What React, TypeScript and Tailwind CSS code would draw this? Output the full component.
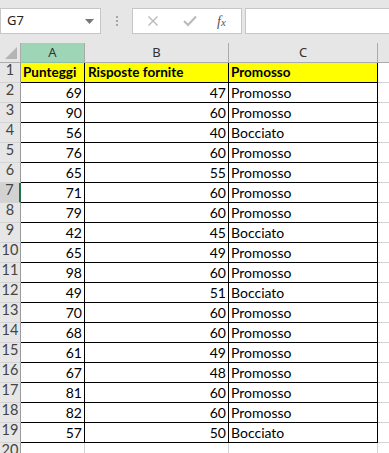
import React from "react";

type Row = [number, number, string];

const rows: Row[] = [
  [69, 47, "Promosso"],
  [90, 60, "Promosso"],
  [56, 40, "Bocciato"],
  [76, 60, "Promosso"],
  [65, 55, "Promosso"],
  [71, 60, "Promosso"],
  [79, 60, "Promosso"],
  [42, 45, "Bocciato"],
  [65, 49, "Promosso"],
  [98, 60, "Promosso"],
  [49, 51, "Bocciato"],
  [70, 60, "Promosso"],
  [68, 60, "Promosso"],
  [61, 49, "Promosso"],
  [67, 48, "Promosso"],
  [81, 60, "Promosso"],
  [82, 60, "Promosso"],
  [57, 50, "Bocciato"],
];

const cellFont = { fontFamily: "Lato, 'Liberation Sans', sans-serif" };

const RowHeader: React.FC<{ n: number; active?: boolean }> = ({ n, active }) => (
  <div
    className={`w-[21px] h-[20px] shrink-0 flex items-end justify-center pb-[1px] text-[14.5px] font-normal text-[#444] border-b border-[#d4d4d4] ${
      active ? "bg-[#d2d2d2] border-r-2 border-r-[#217346]" : "bg-[#e6e6e6] border-r border-r-[#9b9b9b]"
    }`}
  >
    {n}
  </div>
);

export default function App() {
  return (
    <div className="w-[389px] h-[453px] overflow-hidden bg-white text-black" style={cellFont}>
      {/* toolbar */}
      <div className="h-[43px] bg-[#e6e6e6] flex items-start pt-[8px]" style={{ fontFamily: "'Noto Sans', 'Liberation Sans', sans-serif" }}>
        <div className="w-[101px] h-[26px] bg-white border border-[#c6c6c6] flex items-center justify-between pl-[6px] pr-[6px] text-[13px] text-[#222]">
          <span>G7</span>
          <svg width="9" height="5" viewBox="0 0 9 5">
            <path d="M0 0 L9 0 L4.5 5 Z" fill="#777" />
          </svg>
        </div>
        <div className="w-[31px] h-[26px] flex flex-col items-center justify-center gap-[2px]">
          <div className="w-[2px] h-[2px] bg-[#a6a6a6]" />
          <div className="w-[2px] h-[2px] bg-[#a6a6a6]" />
          <div className="w-[2px] h-[2px] bg-[#a6a6a6]" />
        </div>
        <div className="w-[110px] h-[26px] bg-white border border-[#c6c6c6] flex items-center">
          <svg className="ml-[14px]" width="12" height="12" viewBox="0 0 12 12">
            <path d="M1.5 1.5 L10.5 10.5 M10.5 1.5 L1.5 10.5" stroke="#b9b9b9" strokeWidth="1.4" />
          </svg>
          <svg className="ml-[24px]" width="14" height="12" viewBox="0 0 14 12">
            <path d="M1 6 L5 10 L13 1.5" stroke="#b9b9b9" strokeWidth="2" fill="none" />
          </svg>
          <span
            className="ml-[20px] text-[14px] italic text-[#555]"
            style={{ fontFamily: "'Liberation Serif', serif" }}
          >
            f<span className="text-[11px]">x</span>
          </span>
        </div>
        <div className="ml-[3px] flex-1 h-[26px] bg-white border border-[#c6c6c6] border-r-0" />
      </div>

      {/* column headers */}
      <div className="flex h-[20px] bg-[#e6e6e6] text-[13px] text-[#333]" style={{ fontFamily: "'Noto Sans', 'Liberation Sans', sans-serif" }}>
        <div className="w-[21px] shrink-0 border-r border-b border-[#ababab] relative">
          <svg className="absolute right-[3px] bottom-[3px]" width="12" height="12" viewBox="0 0 12 12">
            <path d="M12 0 L12 12 L0 12 Z" fill="#b4b4b4" />
          </svg>
        </div>
        <div className="w-[64px] shrink-0 bg-[#9fd5b7] border-r border-[#ababab] border-b border-b-[#8fbfa3] flex items-center justify-center">A</div>
        <div className="w-[144px] shrink-0 border-r border-b border-[#ababab] flex items-center justify-center">B</div>
        <div className="w-[149px] shrink-0 border-r border-b border-[#ababab] flex items-center justify-center">C</div>
        <div className="flex-1 border-b border-[#ababab]" />
      </div>

      {/* row 1 */}
      <div className="flex h-[20px] text-[13.5px] font-bold">
        <RowHeader n={1} />
        <div className="w-[64px] shrink-0 h-[20px] bg-[#ffff00] border-r border-b border-black flex items-end pl-[2px] leading-[19px]">Punteggi</div>
        <div className="w-[144px] shrink-0 h-[20px] bg-[#ffff00] border-r border-b border-black flex items-end pl-[3px] leading-[19px]">Risposte fornite</div>
        <div className="w-[149px] shrink-0 h-[20px] bg-[#ffff00] border-r border-b border-black flex items-end pl-[2px] leading-[19px]">Promosso</div>
        <div className="flex-1 h-[20px] border-b border-[#d4d4d4]" />
      </div>

      {rows.map((r, i) => (
        <div key={i} className="flex h-[20px] text-[14px]">
          <RowHeader n={i + 2} active={i + 2 === 7} />
          <div className="w-[64px] shrink-0 h-[20px] border-r border-b border-black flex items-end justify-end pr-[2px] leading-[19px]">{r[0]}</div>
          <div className="w-[144px] shrink-0 h-[20px] border-r border-b border-black flex items-end justify-end pr-[2px] leading-[19px]">{r[1]}</div>
          <div className="w-[149px] shrink-0 h-[20px] border-r border-b border-black flex items-end pl-[2px] leading-[19px]">{r[2]}</div>
          <div className="flex-1 h-[20px] border-b border-[#d4d4d4]" />
        </div>
      ))}

      {/* row 20 */}
      <div className="flex h-[20px] text-[14px]">
        <RowHeader n={20} />
        <div className="w-[64px] shrink-0 h-[20px] border-r border-[#d4d4d4]" />
        <div className="w-[144px] shrink-0 h-[20px] border-r border-[#d4d4d4]" />
        <div className="w-[149px] shrink-0 h-[20px] border-r border-[#d4d4d4]" />
        <div className="flex-1 h-[20px]" />
      </div>
    </div>
  );
}
